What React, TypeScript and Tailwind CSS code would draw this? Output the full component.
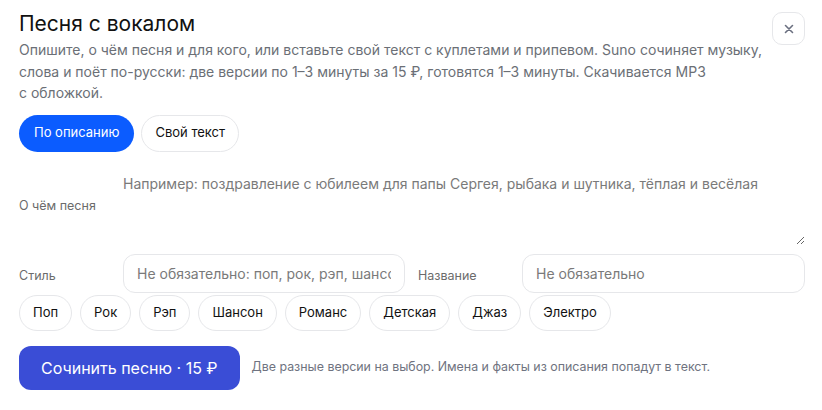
import React, { useState } from 'react'

const styles = ['Поп', 'Рок', 'Рэп', 'Шансон', 'Романс', 'Детская', 'Джаз', 'Электро']

export default function App() {
  const [mode, setMode] = useState<'desc' | 'lyrics'>('desc')

  return (
    <div className="w-[822px] h-[410px] bg-white pl-[19px] pr-[17px] pt-[10px] font-['Inter','Noto_Sans',sans-serif] text-[#111]">
      {/* Header */}
      <div className="flex items-start">
        <div className="w-[748px]">
          <h1 className="text-[21px] leading-[28px] font-normal">Песня с вокалом</h1>
          <p className="mt-[1px] text-[14px] leading-[21.5px] text-[#6b6f76]">
            Опишите, о чём песня и для кого, или вставьте свой текст с куплетами и припевом. Suno сочиняет музыку,
            слова и поёт по-русски: две версии по 1–3 минуты за 15 ₽, готовятся 1–3 минуты. Скачивается MP3
            с&nbsp;обложкой.
          </p>
        </div>
        <button className="ml-auto mt-[2px] w-[33px] h-[33px] rounded-[10px] border border-[#e6e7ea] flex items-center justify-center text-[#6b7080]">
          <svg width="10" height="10" viewBox="0 0 10 10" fill="none" stroke="currentColor" strokeWidth="1.6" strokeLinecap="round">
            <path d="M1.5 1.5l7 7M8.5 1.5l-7 7" />
          </svg>
        </button>
      </div>

      {/* Tabs */}
      <div className="mt-[11px] flex gap-[7px]">
        <button
          onClick={() => setMode('desc')}
          className={
            mode === 'desc'
              ? 'h-[37px] px-[15px] rounded-full bg-[#0b5cff] text-white text-[13px]'
              : 'h-[37px] px-[14px] rounded-full border border-[#e6e7ea] bg-white text-[#111] text-[13px]'
          }
        >
          По описанию
        </button>
        <button
          onClick={() => setMode('lyrics')}
          className={
            mode === 'lyrics'
              ? 'h-[37px] px-[15px] rounded-full bg-[#0b5cff] text-white text-[13px]'
              : 'h-[37px] px-[13px] rounded-full border border-[#e6e7ea] bg-white text-[#111] text-[13px]'
          }
        >
          Свой текст
        </button>
      </div>

      {/* Description textarea */}
      <div className="mt-[17px] flex items-center">
        <label className="w-[104px] shrink-0 text-[12.5px] text-[#6b6b6b]">О чём песня</label>
        <textarea
          rows={3}
          placeholder="Например: поздравление с юбилеем для папы Сергея, рыбака и шутника, тёплая и весёлая"
          className="h-[76px] flex-1 pt-[5px] text-[14px] leading-[20px] outline-none resize-y placeholder:text-[#7a7a7a] bg-white"
        />
      </div>

      {/* Style and title */}
      <div className="mt-[9px] flex items-center">
        <label className="w-[104px] shrink-0 pt-[6px] text-[12.5px] text-[#6b6b6b]">Стиль</label>
        <input
          placeholder="Не обязательно: поп, рок, рэп, шансон"
          className="w-[282px] h-[39px] px-[13px] rounded-[12px] border border-[#e6e7ea] text-[14px] outline-none placeholder:text-[#7a7a7a]"
        />
        <label className="ml-[13px] w-[104px] shrink-0 pt-[6px] text-[12.5px] text-[#6b6b6b]">Название</label>
        <input
          placeholder="Не обязательно"
          className="flex-1 h-[39px] px-[13px] rounded-[12px] border border-[#e6e7ea] text-[14px] outline-none placeholder:text-[#7a7a7a]"
        />
      </div>

      {/* Style chips */}
      <div className="mt-[2px] flex gap-[8px]">
        {styles.map((s) => (
          <button key={s} className="h-[36px] px-[13px] rounded-full border border-[#e6e7ea] bg-white text-[13px] text-[#111]">
            {s}
          </button>
        ))}
      </div>

      {/* Submit */}
      <div className="mt-[15px] flex items-center gap-[12px]">
        <button className="h-[44px] px-[22px] rounded-[12px] bg-[#3a4dd6] text-white text-[16px]">
          Сочинить песню · 15 ₽
        </button>
        <span className="text-[12.4px] text-[#6f7380]">
          Две разные версии на выбор. Имена и факты из описания попадут в текст.
        </span>
      </div>
    </div>
  )
}
